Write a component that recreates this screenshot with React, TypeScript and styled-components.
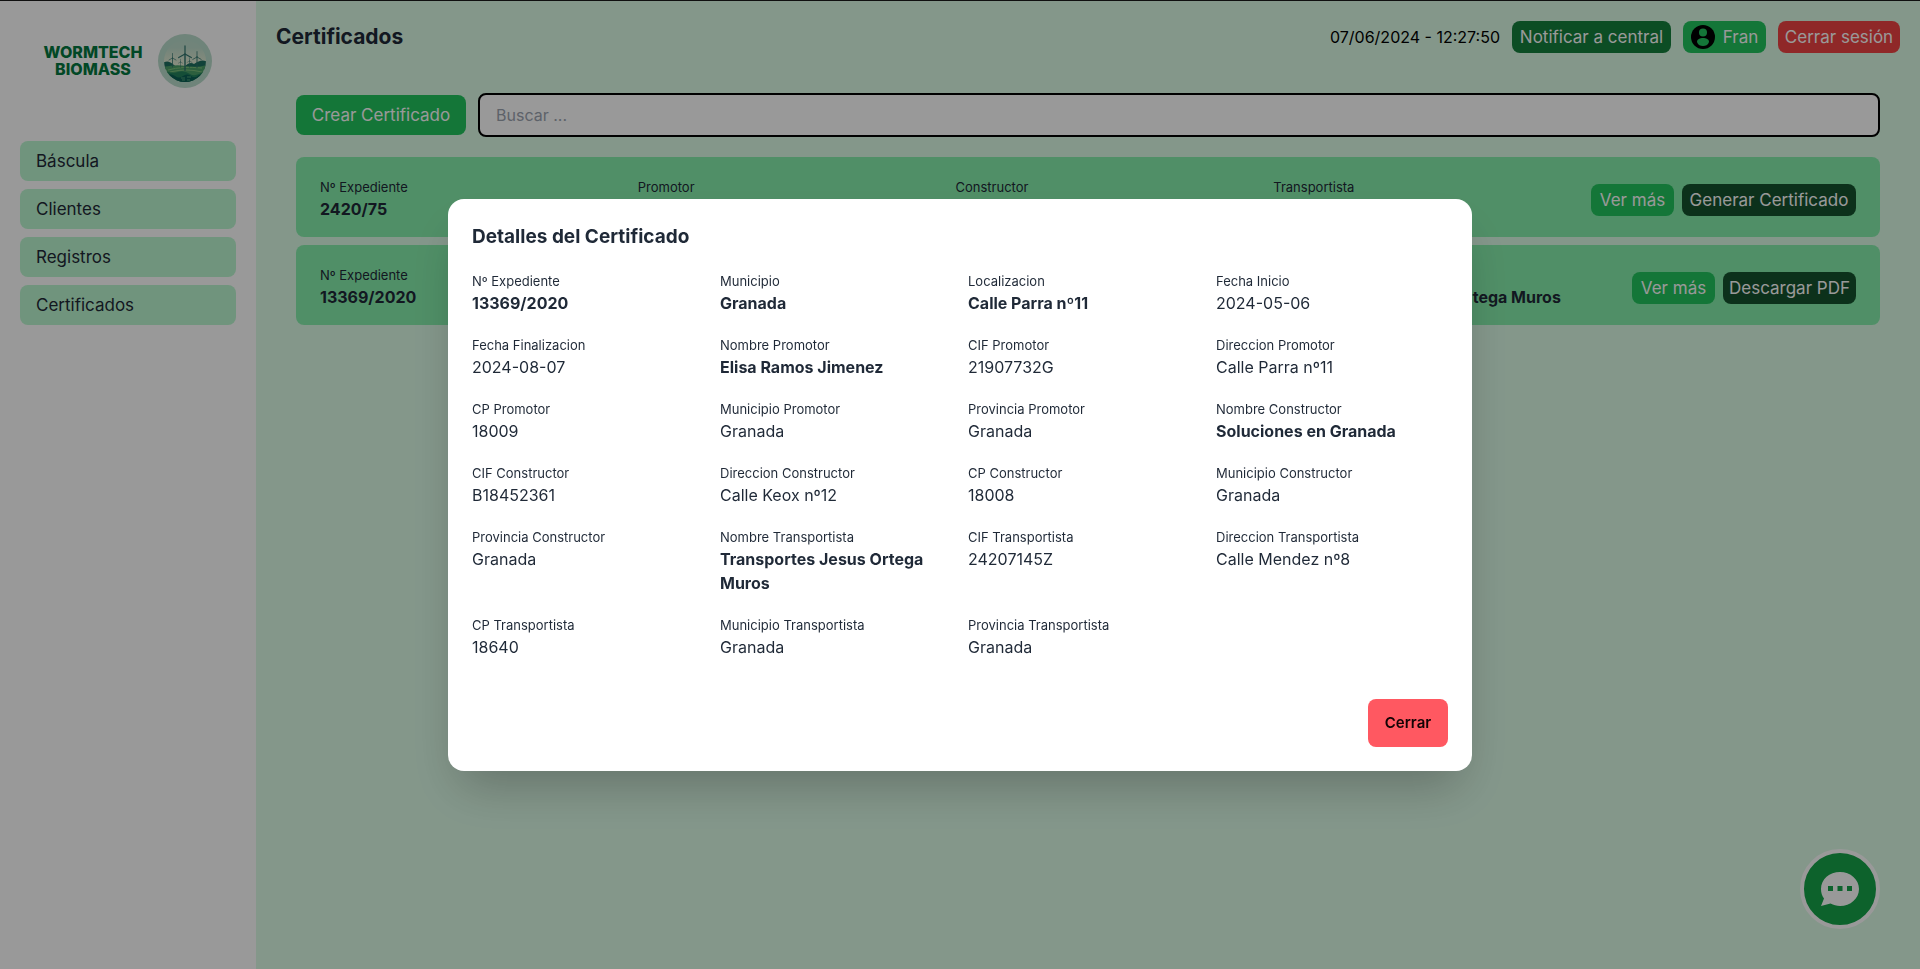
import React from "react";
import styled, { createGlobalStyle, css } from "styled-components";

const GlobalStyle = createGlobalStyle`
  *, *::before, *::after { box-sizing: border-box; }
  body {
    margin: 0;
    font-family: "Inter", sans-serif;
    font-size: 16px;
    line-height: 24px;
    color: #1f2937;
  }
  h1, h2, dl, dd, ul { margin: 0; padding: 0; }
  button, input { font: inherit; }
`;

const Page = styled.div`
  display: flex;
  min-height: 100vh;
  border-top: 1px solid #1c1c1c;
  background: #dcfce7;
`;

const Sidebar = styled.aside`
  flex: none;
  width: 256px;
  padding: 20px;
  background: #ffffff;
`;

const Brand = styled.div`
  display: flex;
  align-items: center;
  justify-content: center;
  gap: 16px;
  height: 80px;
  margin-bottom: 40px;
`;

const BrandName = styled.div`
  font-size: 16px;
  line-height: 17px;
  font-weight: 800;
  text-align: center;
  color: #047840;
`;

const NavList = styled.ul`
  display: flex;
  flex-direction: column;
  gap: 8px;
  list-style: none;
`;

const NavLink = styled.a`
  display: block;
  padding: 8px 16px;
  border-radius: 8px;
  background: #bbf7d0;
  color: inherit;
  font-size: 17px;
  text-decoration: none;
`;

const Main = styled.main`
  flex: 1;
  min-width: 0;
`;

const Header = styled.header`
  display: flex;
  align-items: center;
  justify-content: space-between;
  padding: 20px;
`;

const PageTitle = styled.h1`
  font-size: 21px;
  line-height: 28px;
  font-weight: 700;
`;

const HeaderActions = styled.div`
  display: flex;
  align-items: center;
  gap: 12px;
`;

const Clock = styled.time`
  color: #000000;
`;

const tones = {
  green: "#22c55e",
  forest: "#15803d",
  dark: "#14532d",
  red: "#ef4444",
};

const Button = styled.button<{ $tone: keyof typeof tones; $width: number; $large?: boolean }>`
  display: inline-flex;
  align-items: center;
  justify-content: center;
  gap: 8px;
  min-width: ${(p) => p.$width}px;
  padding: ${(p) => (p.$large ? "8px 12px" : "4px 6px")};
  border: 0;
  border-radius: 8px;
  background: ${(p) => tones[p.$tone]};
  color: #ffffff;
  font-size: 17px;
  white-space: nowrap;
  cursor: pointer;
`;

const Content = styled.section`
  display: flex;
  flex-direction: column;
  gap: 20px;
  padding: 20px 40px;
`;

const Toolbar = styled.div`
  display: flex;
  align-items: center;
  gap: 12px;
`;

const Search = styled.input`
  flex: 1;
  min-width: 0;
  height: 44px;
  padding: 8px 16px;
  border: 2px solid #000000;
  border-radius: 8px;
  background: #ffffff;
  color: #1f2937;
  outline: none;
  &::placeholder { color: #9ca3af; opacity: 1; }
`;

const Records = styled.ul`
  display: flex;
  flex-direction: column;
  gap: 8px;
  list-style: none;
`;

const Record = styled.li`
  display: flex;
  align-items: center;
  padding: 16px 24px;
  border-radius: 8px;
  background: #86efac;
`;

const fourColumns = css`
  display: grid;
  grid-template-columns: repeat(4, minmax(0, 1fr));
`;

const RecordFields = styled.dl`
  ${fourColumns}
  flex: 1;
`;

const RecordActions = styled.div`
  display: flex;
  gap: 8px;
  padding-top: 6px;
`;

const Field = styled.div`
  padding-top: 4px;
`;

const Label = styled.dt`
  font-size: 13px;
  line-height: 20px;
`;

const Value = styled.dd<{ $bold?: boolean }>`
  min-height: 24px;
  font-weight: ${(p) => (p.$bold ? 700 : 400)};
`;

const ChatButton = styled.button`
  position: fixed;
  right: 40px;
  bottom: 40px;
  display: grid;
  place-items: center;
  width: 80px;
  height: 80px;
  padding: 0;
  border: 4px solid #ffffff;
  border-radius: 50%;
  background: #16a34a;
  cursor: pointer;
`;

const Overlay = styled.div`
  position: fixed;
  inset: 0;
  display: grid;
  place-items: center;
  padding: 16px;
  background: rgba(0, 0, 0, 0.4);
`;

const Modal = styled.div`
  width: 100%;
  max-width: 1024px;
  padding: 24px;
  border-radius: 16px;
  background: #ffffff;
  box-shadow: 0 25px 50px -12px rgba(0, 0, 0, 0.25);
`;

const ModalTitle = styled.h2`
  margin-bottom: 16px;
  font-size: 19px;
  line-height: 28px;
  font-weight: 700;
`;

const Details = styled.dl`
  ${fourColumns}
  gap: 16px;
`;

const ModalActions = styled.div`
  display: flex;
  justify-content: flex-end;
  margin-top: 40px;
`;

const CloseButton = styled.button`
  min-width: 80px;
  height: 48px;
  padding: 0 16px;
  border: 0;
  border-radius: 8px;
  background: #ff5861;
  color: #120304;
  font-size: 15px;
  font-weight: 600;
  cursor: pointer;
`;

function Turbine({ x, y, size }: { x: number; y: number; size: number }) {
  return (
    <g transform={`translate(${x} ${y}) scale(${size})`} stroke="#2f736c" strokeLinecap="round" fill="none">
      <path d="M0 0V18" strokeWidth="1.6" />
      <path d="M0 0V-9M0 0L-7 4M0 0L7 4" strokeWidth="1.3" />
    </g>
  );
}

function Emblem() {
  return (
    <svg width="54" height="54" viewBox="0 0 54 54" aria-hidden="true">
      <defs>
        <clipPath id="scene"><circle cx="27" cy="27" r="21" /></clipPath>
        <linearGradient id="sky" x1="0" y1="0" x2="0" y2="1">
          <stop offset="0" stopColor="#b9dccb" />
          <stop offset="0.25" stopColor="#bddccb" />
          <stop offset="0.55" stopColor="#e2ead2" />
        </linearGradient>
      </defs>
      <circle cx="27" cy="27" r="27" fill="#b9dccb" />
      <g clipPath="url(#scene)">
        <rect width="54" height="54" fill="url(#sky)" />
        <path d="M5 29Q10 25 16 31T27 32T36 30Q44 24 49 28V36H5Z" fill="#1d6f60" />
        <path d="M5 33Q18 30 28 32T49 31V44H5Z" fill="#4c9f68" />
        <path d="M10 36Q24 32 44 34M12 38Q28 34 44 38" stroke="#7fc07c" fill="none" />
        <path d="M5 36Q14 40 20 38T32 40T49 35V54H5Z" fill="#23825d" />
        <path d="M8 41Q13 39 17 42T25 42T33 42T41 41L46 40V54H8Z" fill="#0a5f54" />
        <path d="M23 44h4m2-1h4m-9 3h3m2 0h3" stroke="#4fa074" fill="none" />
      </g>
      <Turbine x={27} y={20} size={0.9} />
      <Turbine x={14.5} y={24} size={0.5} />
      <Turbine x={39} y={23} size={0.6} />
      <Turbine x={22.5} y={28} size={0.3} />
      <Turbine x={31.5} y={27} size={0.35} />
    </svg>
  );
}

function UserIcon() {
  return (
    <svg width="24" height="24" viewBox="0 0 24 24" aria-hidden="true">
      <circle cx="12" cy="12" r="12" fill="#000000" />
      <circle cx="12" cy="7.500" r="4" fill="#22c55e" />
      <path d="M6 17C6 14 9 13 12 13S18 14 18 17C17 20 14.500 21 12 21S7 20 6 17Z" fill="#22c55e" />
    </svg>
  );
}

function ChatIcon() {
  return (
    <svg width="40" height="36" viewBox="0 0 40 36" aria-hidden="true">
      <path d="M20 1C9.500 1 1 8 1 18C1 22 2 25 4 27.500L1 35L10.500 32.500C13.500 34 16.500 35 20 35C30.500 35 39 27.500 39 18S30.500 1 20 1Z" fill="#ffffff" />
      <path d="M8 15h5v5h-5zM17.500 15h5v5h-5zM27 15h5v5h-5z" fill="#16a34a" />
    </svg>
  );
}

type FieldData = { label: string; value: string; bold?: boolean };

const navItems = ["Báscula", "Clientes", "Registros", "Certificados"];

const records = [
  { values: ["2420/75", "", "", ""], action: "Generar Certificado", width: 174 },
  {
    values: ["13369/2020", "Elisa Ramos Jimenez", "Soluciones en Granada", "Transportes Jesus Ortega Muros"],
    action: "Descargar PDF",
    width: 133,
  },
];

const recordLabels = ["Nº Expediente", "Promotor", "Constructor", "Transportista"];

const details: FieldData[] = [
  { label: "Nº Expediente", value: "13369/2020", bold: true },
  { label: "Municipio", value: "Granada", bold: true },
  { label: "Localizacion", value: "Calle Parra nº11", bold: true },
  { label: "Fecha Inicio", value: "2024-05-06" },
  { label: "Fecha Finalizacion", value: "2024-08-07" },
  { label: "Nombre Promotor", value: "Elisa Ramos Jimenez", bold: true },
  { label: "CIF Promotor", value: "21907732G" },
  { label: "Direccion Promotor", value: "Calle Parra nº11" },
  { label: "CP Promotor", value: "18009" },
  { label: "Municipio Promotor", value: "Granada" },
  { label: "Provincia Promotor", value: "Granada" },
  { label: "Nombre Constructor", value: "Soluciones en Granada", bold: true },
  { label: "CIF Constructor", value: "B18452361" },
  { label: "Direccion Constructor", value: "Calle Keox nº12" },
  { label: "CP Constructor", value: "18008" },
  { label: "Municipio Constructor", value: "Granada" },
  { label: "Provincia Constructor", value: "Granada" },
  { label: "Nombre Transportista", value: "Transportes Jesus Ortega Muros", bold: true },
  { label: "CIF Transportista", value: "24207145Z" },
  { label: "Direccion Transportista", value: "Calle Mendez nº8" },
  { label: "CP Transportista", value: "18640" },
  { label: "Municipio Transportista", value: "Granada" },
  { label: "Provincia Transportista", value: "Granada" },
];

function DataField({ label, value, bold }: FieldData) {
  return (
    <Field>
      <Label>{label}</Label>
      <Value $bold={bold}>{value}</Value>
    </Field>
  );
}

export default function App() {
  return (
    <>
      <GlobalStyle />
      <Page>
        <Sidebar>
          <Brand>
            <BrandName>WORMTECH<br />BIOMASS</BrandName>
            <Emblem />
          </Brand>
          <nav>
            <NavList>
              {navItems.map((item) => (
                <li key={item}><NavLink href="#">{item}</NavLink></li>
              ))}
            </NavList>
          </nav>
        </Sidebar>
        <Main>
          <Header>
            <PageTitle>Certificados</PageTitle>
            <HeaderActions>
              <Clock>07/06/2024 - 12:27:50</Clock>
              <Button $tone="forest" $width={159}>Notificar a central</Button>
              <Button $tone="green" $width={83}><UserIcon />Fran</Button>
              <Button $tone="red" $width={122}>Cerrar sesión</Button>
            </HeaderActions>
          </Header>
          <Content>
            <Toolbar>
              <Button $tone="green" $width={170} $large>Crear Certificado</Button>
              <Search type="search" placeholder="Buscar ..." aria-label="Buscar" />
            </Toolbar>
            <Records>
              {records.map((record) => (
                <Record key={record.values[0]}>
                  <RecordFields>
                    {recordLabels.map((label, i) => (
                      <DataField key={label} label={label} value={record.values[i]} bold />
                    ))}
                  </RecordFields>
                  <RecordActions>
                    <Button $tone="green" $width={83}>Ver más</Button>
                    <Button $tone="dark" $width={record.width}>{record.action}</Button>
                  </RecordActions>
                </Record>
              ))}
            </Records>
          </Content>
        </Main>
      </Page>
      <ChatButton aria-label="Abrir chat"><ChatIcon /></ChatButton>
      <Overlay>
        <Modal role="dialog" aria-modal="true" aria-labelledby="modal-title">
          <ModalTitle id="modal-title">Detalles del Certificado</ModalTitle>
          <Details>
            {details.map((field) => (
              <DataField key={field.label} {...field} />
            ))}
          </Details>
          <ModalActions>
            <CloseButton>Cerrar</CloseButton>
          </ModalActions>
        </Modal>
      </Overlay>
    </>
  );
}
